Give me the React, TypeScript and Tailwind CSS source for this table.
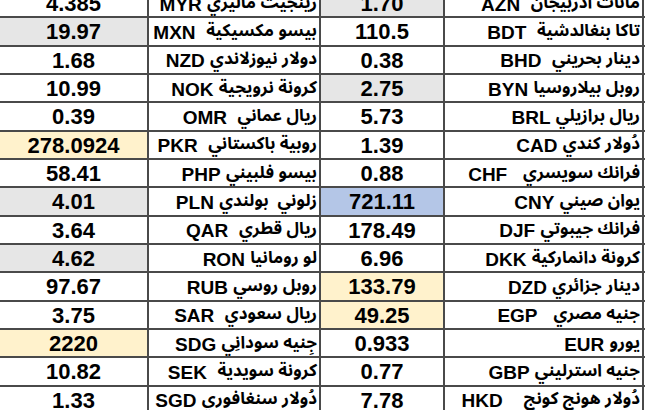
import clsx from 'clsx'

type Tone = 'gray' | 'yellow' | 'blue' | undefined

// [value, code, arabic name, spaces between code and name, highlight]
type Row = [string, string, string, number, Tone?]

const left: Row[] = [
  ['4.385', 'MYR', 'رينجيت ماليزي', 1],
  ['19.97', 'MXN', 'بيسو مكسيكية', 2, 'gray'],
  ['1.68', 'NZD', 'دولار نيوزلاندي', 1],
  ['10.99', 'NOK', 'كرونة نرويجية', 1],
  ['0.39', 'OMR', 'ريال عماني', 2],
  ['278.0924', 'PKR', 'روبية باكستاني', 2, 'yellow'],
  ['58.41', 'PHP', 'بيسو فلبيني', 1],
  ['4.01', 'PLN', 'زلوني  بولندي', 1, 'gray'],
  ['3.64', 'QAR', 'ريال قطري', 2],
  ['4.62', 'RON', 'لو رومانيا', 1, 'gray'],
  ['97.67', 'RUB', 'روبل روسي', 1],
  ['3.75', 'SAR', 'ريال سعودي', 2],
  ['2220', 'SDG', 'جِنيه سودانِي', 1, 'yellow'],
  ['10.82', 'SEK', 'كرونة سويدية', 2],
  ['1.33', 'SGD', 'دُولار سنغافوري', 1],
]

const right: Row[] = [
  ['1.70', 'AZN', 'مانات اذربيجان', 2, 'gray'],
  ['110.5', 'BDT', 'تاكا بنغالدشية', 2],
  ['0.38', 'BHD', 'دينار بحريني', 2],
  ['2.75', 'BYN', 'روبل بيلاروسيا', 1, 'gray'],
  ['5.73', 'BRL', 'ريال برازيلي', 1],
  ['1.39', 'CAD', 'دُولار كندي', 1],
  ['0.88', 'CHF', 'فرانك سويسري', 3],
  ['721.11', 'CNY', 'يوان صيني', 1, 'blue'],
  ['178.49', 'DJF', 'فرانك جيبوتي', 1],
  ['6.96', 'DKK', 'كرونة دانماركية', 1],
  ['133.79', 'DZD', 'دينار جزائري', 1, 'yellow'],
  ['49.25', 'EGP', 'جنيه مصري', 3, 'yellow'],
  ['0.933', 'EUR', 'يورو', 1],
  ['0.77', 'GBP', 'جنيه استرليني', 1],
  ['7.78', 'HKD', 'دُولار هونج كونج', 4],
]

// each cell sits in a dark frame; its right and bottom padding is the grid line
function Frame({ children }: { children: React.ReactNode }) {
  return <div className="flex bg-[#4a4a4a] pr-[2px] pb-[2px]">{children}</div>
}

function ValueCell({ value, tone }: { value: string; tone?: Tone }) {
  return (
    <Frame>
      <div
        className={clsx(
          'flex flex-1 items-center justify-center pt-[2px] text-[22px] leading-none font-bold',
          tone === 'gray' && 'bg-[#e6e6e6]',
          tone === 'yellow' && 'bg-[#fff2cc]',
          tone === 'blue' && 'bg-[#b4c6e7]',
          !tone && 'bg-white'
        )}
      >
        {value}
      </div>
    </Frame>
  )
}

function NameCell({ code, name, gap }: { code: string; name: string; gap: number }) {
  return (
    <Frame>
      <div
        dir="rtl"
        className="flex min-w-0 flex-1 items-center overflow-hidden bg-white pr-[2px] leading-none whitespace-pre"
      >
        <span className="text-[17px] font-bold [font-family:'Noto_Sans_Arabic','DejaVu_Sans',sans-serif]">
          {name}
        </span>
        <span className="text-[19px] font-bold">{' '.repeat(gap)}</span>
        <span dir="ltr" className="pt-[2px] text-[19px] font-bold">
          {code}
        </span>
      </div>
    </Frame>
  )
}

export default function App() {
  return (
    <div className="h-[410px] w-[645px] overflow-hidden bg-white text-black [font-family:'Liberation_Sans','DejaVu_Sans',sans-serif]">
      <div className="-mt-[10px] grid w-[760px] auto-rows-[28.33px] grid-cols-[149px_172px_124px_199px_1fr]">
        {left.map((l, i) => {
          const r = right[i]
          return [
            <ValueCell key={`${l[1]}-v`} value={l[0]} tone={l[4]} />,
            <NameCell key={`${l[1]}-n`} code={l[1]} name={l[2]} gap={l[3]} />,
            <ValueCell key={`${r[1]}-v`} value={r[0]} tone={r[4]} />,
            <NameCell key={`${r[1]}-n`} code={r[1]} name={r[2]} gap={r[3]} />,
            <Frame key={`${l[1]}-x`}>
              <div className="flex-1 bg-white" />
            </Frame>,
          ]
        })}
      </div>
    </div>
  )
}
